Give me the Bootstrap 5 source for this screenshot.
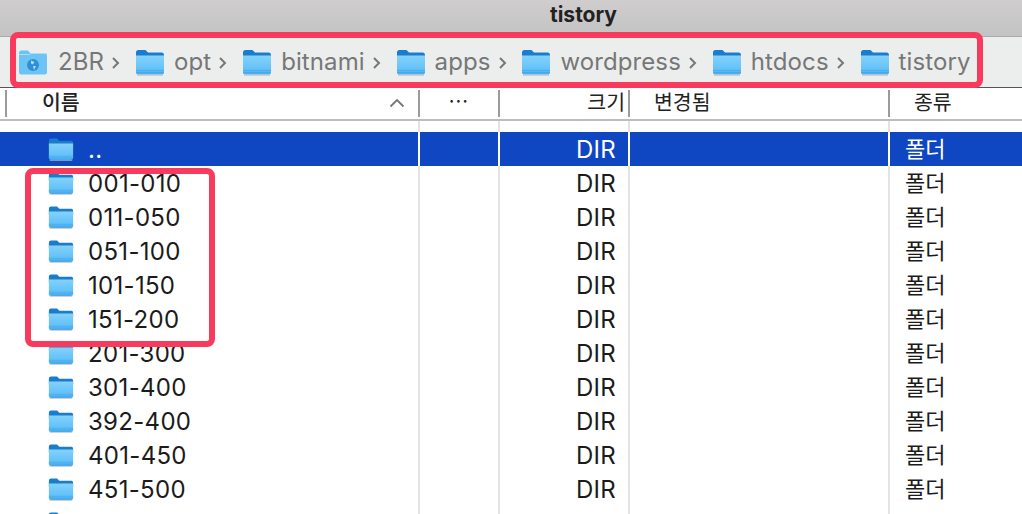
<!doctype html>
<html lang="ko"><head><meta charset="utf-8"><title>tistory</title>
<link rel="stylesheet" href="https://cdn.jsdelivr.net/npm/bootstrap@5.3.0/dist/css/bootstrap.min.css">
<style>
html,body{height:514px;overflow:hidden;background:#fff}
body{font-family:Inter,"Noto Sans CJK KR","Liberation Sans",sans-serif;color:#1b1b1b;position:relative;width:1022px}
.defs{position:absolute}
.ttl{height:37px;background:linear-gradient(#cfcdce,#c4c3c3);font-size:21px;font-weight:700;line-height:30px;color:#222;border-bottom:1px solid #aaa;padding-left:145px}
.pbar{height:51px;background:#eceeed;border-bottom:1px solid #555;padding:0 0 0 18px;font-size:24px;color:#777;white-space:nowrap}
.pbar .crumb{margin-right:8px;letter-spacing:.1px}
.chev{width:10px;height:16px;margin:2px 13.9px 0 -1px;flex:none}
.pbar svg.fo{width:30px;height:30px;flex:none;margin-right:9px}
.pbar svg.net{margin-right:10px}
.hdr{height:33px;border-bottom:2px solid #bdbdbd;font-size:20.5px;color:#222;line-height:25px}
.gp{height:11px}
.cn{width:420px;flex:none;border-right:2px solid #e3e3e3;padding-left:88px;display:flex;align-items:flex-start;position:relative}
.cd{width:80px;flex:none;border-right:2px solid #e3e3e3}
.cs{width:130px;flex:none;border-right:2px solid #e3e3e3;text-align:right;padding-right:12px}
.cm{width:260px;flex:none;border-right:2px solid #e3e3e3}
.ck{flex:1;padding-left:15px}
.hdr>div{height:27px;border-right:2px solid #9b9b9b;margin-top:2px}
.hdr .h0{width:7px;flex:none}
.hdr .cn{width:413px;padding-left:35px;justify-content:space-between;padding-right:13px}
.hdr .cn svg{margin-top:8px}
.hdr .cd{text-align:center;line-height:22px;font-size:20px;letter-spacing:1px}
.hdr .cs{padding-right:3px}
.hdr .cm{padding-left:24px}
.hdr .ck{border:0;padding-left:24px}
.rowx{height:34px;font-size:24px;letter-spacing:.3px;line-height:36px;display:flex;white-space:nowrap}
.rowx.gp{height:11px}
.rowx>div{height:100%}
.rowx .fo{position:absolute;left:48px;top:4px;width:26px;height:26px}
.rowx .ck{font-size:22px;letter-spacing:0;line-height:34px}
.rowx.sel{background:#0f46c2;color:#fff}
.sel>div{border-color:#fff}
.mk{position:absolute;border:6px solid #f83a5c;border-radius:8px;pointer-events:none}
.mk1{left:10px;top:32px;width:973px;height:56px}
.mk2{left:25px;top:168px;width:190px;height:179px}
</style></head><body>
<svg width="0" height="0" class="defs"><defs>
<linearGradient id="gb" x1="0" y1="0" x2="0" y2="1"><stop offset="0" stop-color="#84d2fb"/><stop offset=".8" stop-color="#5fbff8"/><stop offset="1" stop-color="#46a8ec"/></linearGradient>
<symbol id="folder" viewBox="0 0 30 30"><path d="M1 5.500Q1 3 3.500 3H10.500L13 5.500H27Q29 5.500 29 8V12H1Z" fill="#1a7ccd"/><path d="M1 8.600H29V25Q29 27.600 26.500 27.600H3.500Q1 27.600 1 25Z" fill="url(#gb)"/><path d="M1 23.400H29M1 25.400H29" stroke="#3d9fe2" stroke-width=".6"/><path d="M2 28.300H28" stroke="#bbb" stroke-width=".8"/></symbol>
</defs></svg>
<div class="ttl text-center">tistory</div>
<div class="pbar d-flex align-items-center">
<svg class="fo net" viewBox="0 0 30 30"><path d="M1 6Q1 3.500 3.500 3.500H10L12.500 6.500H26.500Q29 6.500 29 9V25.500Q29 27.500 27 27.500H3Q1 27.500 1 25.500Z" fill="#6cc3f6"/><path d="M1 7.500H11.500L13 6.500H29" stroke="#a9defa" fill="none"/><circle cx="15" cy="18" r="6" fill="#2f8fd6"/><path d="M13 13.500L16.500 15 15 17.500 13 16.500ZM15 19H18L16 23Z" fill="#a9ddf9"/></svg>
<span class="crumb">2BR</span><svg class="chev" viewBox="0 0 10 16"><path d="M2 3l5 5-5 5" fill="none" stroke="#777" stroke-width="2"/></svg>
<svg class="fo"><use href="#folder"/></svg><span class="crumb">opt</span><svg class="chev" viewBox="0 0 10 16"><path d="M2 3l5 5-5 5" fill="none" stroke="#777" stroke-width="2"/></svg>
<svg class="fo"><use href="#folder"/></svg><span class="crumb">bitnami</span><svg class="chev" viewBox="0 0 10 16"><path d="M2 3l5 5-5 5" fill="none" stroke="#777" stroke-width="2"/></svg>
<svg class="fo"><use href="#folder"/></svg><span class="crumb">apps</span><svg class="chev" viewBox="0 0 10 16"><path d="M2 3l5 5-5 5" fill="none" stroke="#777" stroke-width="2"/></svg>
<svg class="fo"><use href="#folder"/></svg><span class="crumb">wordpress</span><svg class="chev" viewBox="0 0 10 16"><path d="M2 3l5 5-5 5" fill="none" stroke="#777" stroke-width="2"/></svg>
<svg class="fo"><use href="#folder"/></svg><span class="crumb">htdocs</span><svg class="chev" viewBox="0 0 10 16"><path d="M2 3l5 5-5 5" fill="none" stroke="#777" stroke-width="2"/></svg>
<svg class="fo"><use href="#folder"/></svg><span class="crumb">tistory</span>
</div>
<div class="hdr d-flex">
<div class="h0"></div>
<div class="cn"><span class="fw-medium">이름</span><svg width="16" height="10" viewBox="0 0 16 10"><path d="M1.500 8.500L8 2l6.500 6.500" fill="none" stroke="#777" stroke-width="1.800"/></svg></div>
<div class="cd">···</div><div class="cs">크기</div><div class="cm">변경됨</div><div class="ck">종류</div>
</div>
<div class="rowx gp"><div class="cn"></div><div class="cd"></div><div class="cs"></div><div class="cm"></div></div>
<div class="rowx sel"><div class="cn"><svg class="fo" viewBox="0 0 30 30"><use href="#folder"/></svg>..</div><div class="cd"></div><div class="cs">DIR</div><div class="cm"></div><div class="ck">폴더</div></div>
<div class="rowx"><div class="cn"><svg class="fo" viewBox="0 0 30 30"><use href="#folder"/></svg>001-010</div><div class="cd"></div><div class="cs">DIR</div><div class="cm"></div><div class="ck">폴더</div></div>
<div class="rowx"><div class="cn"><svg class="fo" viewBox="0 0 30 30"><use href="#folder"/></svg>011-050</div><div class="cd"></div><div class="cs">DIR</div><div class="cm"></div><div class="ck">폴더</div></div>
<div class="rowx"><div class="cn"><svg class="fo" viewBox="0 0 30 30"><use href="#folder"/></svg>051-100</div><div class="cd"></div><div class="cs">DIR</div><div class="cm"></div><div class="ck">폴더</div></div>
<div class="rowx"><div class="cn"><svg class="fo" viewBox="0 0 30 30"><use href="#folder"/></svg>101-150</div><div class="cd"></div><div class="cs">DIR</div><div class="cm"></div><div class="ck">폴더</div></div>
<div class="rowx"><div class="cn"><svg class="fo" viewBox="0 0 30 30"><use href="#folder"/></svg>151-200</div><div class="cd"></div><div class="cs">DIR</div><div class="cm"></div><div class="ck">폴더</div></div>
<div class="rowx"><div class="cn"><svg class="fo" viewBox="0 0 30 30"><use href="#folder"/></svg>201-300</div><div class="cd"></div><div class="cs">DIR</div><div class="cm"></div><div class="ck">폴더</div></div>
<div class="rowx"><div class="cn"><svg class="fo" viewBox="0 0 30 30"><use href="#folder"/></svg>301-400</div><div class="cd"></div><div class="cs">DIR</div><div class="cm"></div><div class="ck">폴더</div></div>
<div class="rowx"><div class="cn"><svg class="fo" viewBox="0 0 30 30"><use href="#folder"/></svg>392-400</div><div class="cd"></div><div class="cs">DIR</div><div class="cm"></div><div class="ck">폴더</div></div>
<div class="rowx"><div class="cn"><svg class="fo" viewBox="0 0 30 30"><use href="#folder"/></svg>401-450</div><div class="cd"></div><div class="cs">DIR</div><div class="cm"></div><div class="ck">폴더</div></div>
<div class="rowx"><div class="cn"><svg class="fo" viewBox="0 0 30 30"><use href="#folder"/></svg>451-500</div><div class="cd"></div><div class="cs">DIR</div><div class="cm"></div><div class="ck">폴더</div></div>
<div class="rowx"><div class="cn"><svg class="fo" viewBox="0 0 30 30"><use href="#folder"/></svg></div><div class="cd"></div><div class="cs"></div><div class="cm"></div><div class="ck"></div></div>
<div class="mk mk1"></div><div class="mk mk2"></div>
</body></html>
